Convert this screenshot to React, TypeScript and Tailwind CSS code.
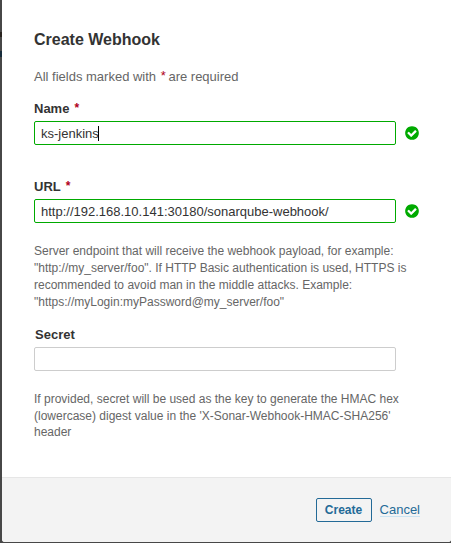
import type { ReactNode } from 'react';

function ValidIcon() {
  return (
    <svg className="ml-2 size-4 shrink-0" viewBox="0 0 16 16" aria-hidden="true">
      <path
        fill="#00aa00"
        fillRule="evenodd"
        d="M12.607 6.554q0-.25-.161-.411l-.813-.804q-.17-.17-.402-.17t-.402.17l-3.643 3.634-2.018-2.018q-.17-.17-.402-.17t-.402.17l-.812.804q-.161.161-.161.411 0 .241.161.402l3.232 3.232q.17.17.402.17.241 0 .411-.17l4.848-4.848q.161-.161.161-.402zM14.857 8q0 1.866-.92 3.442t-2.496 2.496-3.442.92-3.442-.92-2.496-2.496T1.143 8t.92-3.442 2.496-2.496T8 1.143t3.442.92 2.496 2.496.92 3.442z"
      />
    </svg>
  );
}

function Label({ children, required }: { children: ReactNode; required?: boolean }) {
  return (
    <div className="flex h-5 pt-px text-[13px] leading-5 font-bold text-[#333]">
      {children}
      {required && <em className="ml-[5px] text-xs leading-[18px] not-italic text-[#b00020]">*</em>}
    </div>
  );
}

function Field({ value, valid, focused }: { value: string; valid?: boolean; focused?: boolean }) {
  return (
    <div className="mt-[3px] flex h-6 items-center">
      <div
        className={`flex h-6 w-[362px] rounded-[2px] border bg-white px-[6px] pt-px text-[13px] leading-[22px] text-[#333] ${
          valid ? 'border-[#00aa00]' : 'border-[#cdcdcd]'
        }`}
      >
        <span>{value}</span>
        {focused && <span className="-ml-px mt-[3px] h-[15px] w-px bg-black" />}
      </div>
      {valid && <ValidIcon />}
    </div>
  );
}

export default function App() {
  return (
    <div className="relative h-[543px] w-[451px] overflow-hidden bg-[#474747] pl-[2px] font-['Liberation_Sans',Arial,sans-serif]">
      {/* Edges of the dimmed page content behind the dialog */}
      <span className="absolute top-8 left-0 h-[5px] w-[2px] bg-[#29231f]" />
      <span className="absolute top-[51px] left-0 h-[6px] w-[2px] bg-[#172c3b]" />
      <div className="flex h-[542px] flex-col overflow-hidden rounded-b-[3px] bg-white">
        <main className="h-[477px] pt-[30px] pl-8">
          <h2 className="h-5 text-base leading-5 font-bold text-[#333]">Create Webhook</h2>
          <p className="mt-[17px] h-5 text-[13px] leading-5 text-[#666]">
            All fields marked with{' '}
            <em className="relative -top-px left-px not-italic text-[#b00020]">*</em> are required
          </p>
          <div className="mt-[11px] h-[78px]">
            <Label required>Name</Label>
            <Field value="ks-jenkins" valid focused />
          </div>
          <div className="h-[148px]">
            <Label required>URL</Label>
            <Field value="http://192.168.10.141:30180/sonarqube-webhook/" valid />
            <p className="mt-5 text-xs leading-[17px] whitespace-nowrap text-[#666]">
              Server endpoint that will receive the webhook payload, for example:
              <br />
              "http://my_server/foo". If HTTP Basic authentication is used, HTTPS is
              <br />
              recommended to avoid man in the middle attacks. Example:
              <br />
              "https://myLogin:myPassword@my_server/foo"
            </p>
          </div>
          <div>
            <Label>
              <span className="ml-px">Secret</span>
            </Label>
            <Field value="" />
            <p className="mt-5 text-xs leading-[16.5px] whitespace-nowrap text-[#666]">
              If provided, secret will be used as the key to generate the HMAC hex
              <br />
              (lowercase) digest value in the 'X-Sonar-Webhook-HMAC-SHA256'
              <br />
              header
            </p>
          </div>
        </main>
        <footer className="flex h-[65px] justify-end border-t border-[#e6e6e6] bg-[#f3f3f3] pt-5 pr-[31px]">
          <button className="h-6 w-14 rounded-[2px] border border-[#236a97] text-xs leading-[22px] font-bold text-[#236a97]">
            Create
          </button>
          <a className="ml-2 h-[19px] border-b border-[#cae3f2] text-[13px] leading-[23px] text-[#236a97]">Cancel</a>
        </footer>
      </div>
    </div>
  );
}
